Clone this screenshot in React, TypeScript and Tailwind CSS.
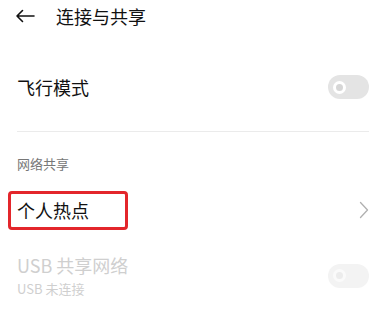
import React from "react";

function Toggle({ faded }: { faded?: boolean }) {
  return (
    <div
      className={`w-[41px] h-[24px] rounded-full flex items-center pl-[5px] ${
        faded ? "bg-[#f3f3f3]" : "bg-[#e4e4e4]"
      }`}
    >
      <div
        className={`w-[13px] h-[13px] rounded-full border-[3px] ${
          faded ? "border-[#fafafa] bg-[#ececec]" : "border-white bg-[#d6d6d6]"
        }`}
      />
    </div>
  );
}

export default function App() {
  return (
    <div
      className="w-[389px] h-[309px] bg-white overflow-hidden relative"
      style={{ fontFamily: '"Noto Sans CJK SC", "Noto Sans", sans-serif' }}
    >
      <div className="h-[32px] flex items-center pl-[15px]">
        <svg width="20" height="14" viewBox="0 0 20 14" fill="none" stroke="#111" strokeWidth="1.6" strokeLinecap="round" strokeLinejoin="round">
          <path d="M19 7H2M7.5 1.5L2 7l5.5 5.5" />
        </svg>
        <span className="ml-[21px] text-[18px] leading-[24px] text-[#111]">连接与共享</span>
      </div>

      <div className="mt-[40px] h-[30px] flex items-center justify-between pl-[17px] pr-[20px]">
        <span className="text-[18px] leading-[24px] text-[#111]">飞行模式</span>
        <Toggle />
      </div>

      <div className="mt-[29px] ml-[17px] mr-[20px] h-px bg-[#ebebeb]" />

      <div className="mt-[23px] pl-[17px] text-[13px] leading-[18px] text-[#777]">网络共享</div>

      <div className="mt-[17px] h-[40px] flex items-center justify-between pl-[17px] pr-[20px]">
        <span className="text-[18px] leading-[24px] text-[#111]">个人热点</span>
        <svg width="10" height="18" viewBox="0 0 10 18" fill="none" stroke="#b0b0b0" strokeWidth="1.3" strokeLinecap="round" strokeLinejoin="round" className="mr-[0px]">
          <path d="M1.5 1.5L8.5 9l-7 7.5" />
        </svg>
      </div>

      <div className="mt-[23px] flex items-center justify-between pl-[17px] pr-[20px]">
        <div className="flex flex-col">
          <span className="text-[18px] leading-[24px] text-[#cfcfcf]">USB 共享网络</span>
          <span className="mt-[3px] text-[13px] leading-[18px] text-[#cfcfcf]">USB 未连接</span>
        </div>
        <Toggle faded />
      </div>

      <div className="absolute left-[8px] top-[191px] w-[120px] h-[39px] border-[3px] border-[#e3262b] rounded-[4px]" />
    </div>
  );
}
